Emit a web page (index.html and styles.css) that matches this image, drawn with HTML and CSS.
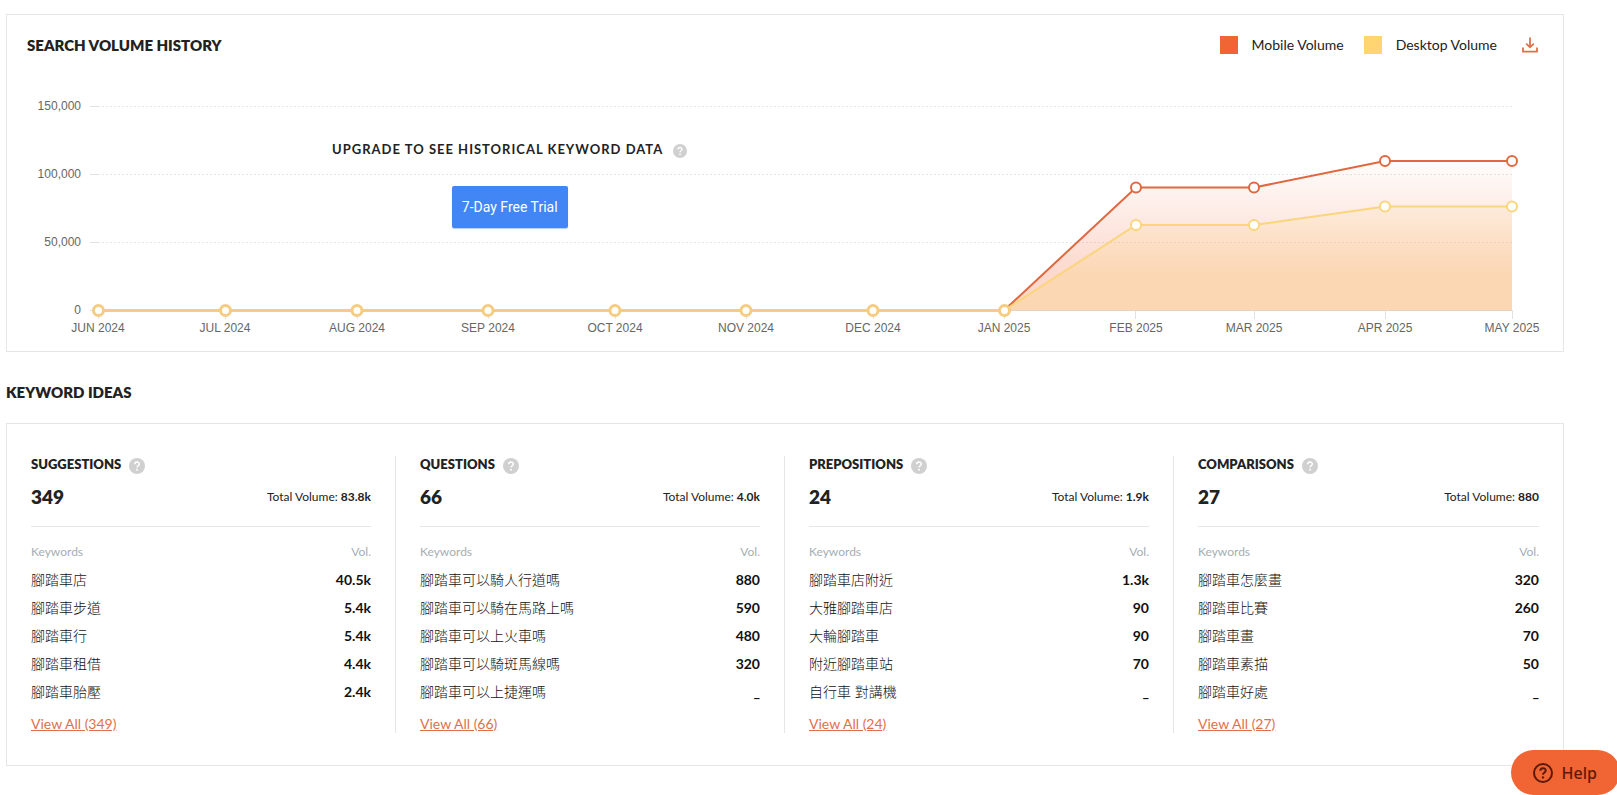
FILE: index.html
```html
<!DOCTYPE html>
<html lang="zh-Hant">
<head>
<meta charset="utf-8">
<title>Keyword overview</title>
<link rel="stylesheet" href="styles.css">
</head>
<body>
<svg class="defs" width="0" height="0" aria-hidden="true">
  <symbol id="hint" viewBox="0 0 16 16">
    <circle cx="8" cy="8" r="8" fill="#d0d0d1"/>
    <path d="M5.7 6.3 C5.7 3.2 10.3 3.3 10.3 6 C10.3 7.8 8 7.7 8 9.6" fill="none" stroke="#fff" stroke-width="1.5"/>
    <circle cx="8" cy="11.8" r="1" fill="#fff"/>
  </symbol>
</svg>
<main class="page">
  <section class="card history">
    <header class="history-head">
      <h2 class="title">SEARCH VOLUME HISTORY</h2>
      <div class="legend">
        <span class="legend-item"><span class="swatch mobile"></span>Mobile Volume</span>
        <span class="legend-item"><span class="swatch desktop"></span>Desktop Volume</span>
        <button class="download" type="button" aria-label="Download">
          <svg width="16" height="16" viewBox="0 0 16 16" fill="none" stroke="#e0704b" stroke-width="1.8"><path d="M8 0.5 V10 M4.2 6.6 L8 10.3 L11.8 6.6 M1 10.5 V14.7 H15 V10.5"/></svg>
        </button>
      </div>
    </header>
    <div class="chart">
      <svg class="plot" viewBox="0 0 1556 287" role="img" aria-label="Search volume by month">
        <defs>
          <linearGradient id="gm" gradientUnits="userSpaceOnUse" x1="0" y1="97" x2="0" y2="211"><stop offset="0" stop-color="#f26334" stop-opacity="0.02"/><stop offset="1" stop-color="#f26334" stop-opacity="0.25"/></linearGradient>
          <linearGradient id="gd" gradientUnits="userSpaceOnUse" x1="0" y1="120" x2="0" y2="211"><stop offset="0" stop-color="#ffd470" stop-opacity="0.05"/><stop offset="1" stop-color="#fbd474" stop-opacity="0.28"/></linearGradient>
        </defs>
        <path class="grid" d="M91 42.5H1505M91 110.5H1505M91 178.5H1505"/>
        <path class="axis" d="M83 42.5H92M83 110.5H92M83 178.5H92M83 246.5H1506M91.5 247V255M218.5 247V255M350.5 247V255M481.5 247V255M608.5 247V255M739.5 247V255M866.5 247V255M997.5 247V255M1128.5 247V255M1247.5 247V255M1378.5 247V255M1505.5 247V255"/>
        <path fill="url(#gm)" d="M997 246.5L1129 123.5H1247L1378 97H1505V246.5Z"/>
        <path fill="url(#gd)" d="M997 246.5L1129 161H1247L1378 142.5H1505V246.5Z"/>
        <g class="series mobile-line">
          <path d="M997 246.5L1129 123.5H1247L1378 97H1505"/>
          <circle cx="1129" cy="123.5" r="5"/><circle cx="1247" cy="123.5" r="5"/><circle cx="1378" cy="97" r="5"/><circle cx="1505" cy="97" r="5"/>
        </g>
        <g class="series desktop-line">
          <path d="M997 246.5L1129 161H1247L1378 142.5H1505"/>
          <circle cx="1129" cy="161" r="5"/><circle cx="1247" cy="161" r="5"/><circle cx="1378" cy="142.5" r="5"/><circle cx="1505" cy="142.5" r="5"/>
        </g>
        <g class="series zero-line">
          <path d="M91 246.5H997"/>
          <circle cx="91.5" cy="246.5" r="5"/><circle cx="218.5" cy="246.5" r="5"/><circle cx="350" cy="246.5" r="5"/><circle cx="481" cy="246.5" r="5"/><circle cx="608" cy="246.5" r="5"/><circle cx="739" cy="246.5" r="5"/><circle cx="866" cy="246.5" r="5"/><circle cx="997.5" cy="246.5" r="5"/>
        </g>
        <g class="labels y-labels">
          <text x="74" y="46">150,000</text><text x="74" y="114">100,000</text><text x="74" y="182">50,000</text><text x="74" y="250">0</text>
        </g>
        <g class="labels x-labels">
          <text x="91" y="268">JUN 2024</text><text x="218" y="268">JUL 2024</text><text x="350" y="268">AUG 2024</text><text x="481" y="268">SEP 2024</text><text x="608" y="268">OCT 2024</text><text x="739" y="268">NOV 2024</text><text x="866" y="268">DEC 2024</text><text x="997" y="268">JAN 2025</text><text x="1129" y="268">FEB 2025</text><text x="1247" y="268">MAR 2025</text><text x="1378" y="268">APR 2025</text><text x="1505" y="268">MAY 2025</text>
        </g>
      </svg>
      <div class="upgrade">
        <p class="upgrade-text">UPGRADE TO SEE HISTORICAL KEYWORD DATA <svg class="hint-small" width="14" height="14"><use href="#hint"/></svg></p>
        <button class="trial" type="button">7-Day Free Trial</button>
      </div>
    </div>
  </section>

  <h2 class="title ideas-title">KEYWORD IDEAS</h2>

  <section class="card ideas">
    <article class="idea">
      <h3 class="idea-name">SUGGESTIONS <svg width="16" height="16"><use href="#hint"/></svg></h3>
      <div class="summary"><strong class="count">349</strong><span class="total">Total Volume: <b>83.8k</b></span></div>
      <table class="words">
        <thead><tr><th>Keywords</th><th>Vol.</th></tr></thead>
        <tbody>
          <tr><td>腳踏車店</td><td>40.5k</td></tr>
          <tr><td>腳踏車步道</td><td>5.4k</td></tr>
          <tr><td>腳踏車行</td><td>5.4k</td></tr>
          <tr><td>腳踏車租借</td><td>4.4k</td></tr>
          <tr><td>腳踏車胎壓</td><td>2.4k</td></tr>
        </tbody>
      </table>
      <a class="all" href="#">View All (349)</a>
    </article>
    <article class="idea">
      <h3 class="idea-name">QUESTIONS <svg width="16" height="16"><use href="#hint"/></svg></h3>
      <div class="summary"><strong class="count">66</strong><span class="total">Total Volume: <b>4.0k</b></span></div>
      <table class="words">
        <thead><tr><th>Keywords</th><th>Vol.</th></tr></thead>
        <tbody>
          <tr><td>腳踏車可以騎人行道嗎</td><td>880</td></tr>
          <tr><td>腳踏車可以騎在馬路上嗎</td><td>590</td></tr>
          <tr><td>腳踏車可以上火車嗎</td><td>480</td></tr>
          <tr><td>腳踏車可以騎斑馬線嗎</td><td>320</td></tr>
          <tr><td>腳踏車可以上捷運嗎</td><td>_</td></tr>
        </tbody>
      </table>
      <a class="all" href="#">View All (66)</a>
    </article>
    <article class="idea">
      <h3 class="idea-name">PREPOSITIONS <svg width="16" height="16"><use href="#hint"/></svg></h3>
      <div class="summary"><strong class="count">24</strong><span class="total">Total Volume: <b>1.9k</b></span></div>
      <table class="words">
        <thead><tr><th>Keywords</th><th>Vol.</th></tr></thead>
        <tbody>
          <tr><td>腳踏車店附近</td><td>1.3k</td></tr>
          <tr><td>大雅腳踏車店</td><td>90</td></tr>
          <tr><td>大輪腳踏車</td><td>90</td></tr>
          <tr><td>附近腳踏車站</td><td>70</td></tr>
          <tr><td>自行車 對講機</td><td>_</td></tr>
        </tbody>
      </table>
      <a class="all" href="#">View All (24)</a>
    </article>
    <article class="idea">
      <h3 class="idea-name">COMPARISONS <svg width="16" height="16"><use href="#hint"/></svg></h3>
      <div class="summary"><strong class="count">27</strong><span class="total">Total Volume: <b>880</b></span></div>
      <table class="words">
        <thead><tr><th>Keywords</th><th>Vol.</th></tr></thead>
        <tbody>
          <tr><td>腳踏車怎麼畫</td><td>320</td></tr>
          <tr><td>腳踏車比賽</td><td>260</td></tr>
          <tr><td>腳踏車畫</td><td>70</td></tr>
          <tr><td>腳踏車素描</td><td>50</td></tr>
          <tr><td>腳踏車好處</td><td>_</td></tr>
        </tbody>
      </table>
      <a class="all" href="#">View All (27)</a>
    </article>
  </section>
</main>
<button class="help" type="button">
  <svg width="20" height="20" viewBox="0 0 20 20" fill="none" stroke="#5c1a06" stroke-width="2"><circle cx="10" cy="10" r="9"/><path d="M7.3 7.8 C7.3 4.3 12.7 4.5 12.7 7.5 C12.7 9.6 10 9.3 10 11.8"/><circle cx="10" cy="14.4" r="1.2" fill="#5c1a06" stroke="none"/></svg>
  Help
</button>
</body>
</html>
```
FILE: styles.css
```css
* { box-sizing: border-box; }
body {
  margin: 0;
  background: #fff;
  color: #222;
  font: 14px/20px Lato, "Noto Sans CJK TC", sans-serif;
}
.defs { position: absolute; }
.page { padding: 14px 53px 28px 6px; }
.card { border: 1px solid #e6e6e6; }
.title { margin: 0; font-size: 15px; line-height: 20px; font-weight: 800; color: #222; }

.history-head {
  display: flex;
  justify-content: space-between;
  align-items: center;
  padding: 13px 20px 2px;
  min-height: 49px;
}
.legend { display: flex; align-items: center; gap: 20px; }
.legend-item { display: flex; align-items: center; gap: 14px; }
.swatch { width: 18px; height: 18px; }
.swatch.mobile { background: #f16434; }
.swatch.desktop { background: #ffd572; }
.download {
  display: grid;
  place-items: center;
  width: 26px;
  height: 26px;
  padding: 0;
  border: 0;
  background: none;
}

.chart { position: relative; }
.plot { display: block; width: 100%; height: auto; }
.grid { fill: none; stroke: #e6e6e6; stroke-dasharray: 2 2; }
.axis { fill: none; stroke: #e2e2e2; }
.series path { fill: none; stroke-width: 2; }
.series circle { fill: #fff; stroke-width: 2; }
.mobile-line { stroke: #e0683f; }
.desktop-line { stroke: #fad57c; }
.zero-line { stroke: #f5cc82; }
.series.zero-line path, .series.zero-line circle { stroke-width: 3; }
.labels { font: 12px "Liberation Sans", sans-serif; fill: #666; }
.x-labels { text-anchor: middle; }
.y-labels { text-anchor: end; }

.upgrade {
  position: absolute;
  top: 75px;
  left: 0;
  width: 65%;
  padding-right: 6px;
  display: flex;
  flex-direction: column;
  align-items: center;
  gap: 27px;
}
.upgrade-text {
  display: flex;
  align-items: center;
  gap: 10px;
  margin: 0;
  font-size: 13px;
  line-height: 20px;
  font-weight: 700;
  letter-spacing: 1px;
}
.hint-small { margin-top: 3px; }
.trial {
  height: 42px;
  padding: 0 10px;
  border: 0;
  border-radius: 2px;
  background: #4285f4;
  box-shadow: 0 1px 1px #4285f466;
  color: #fff;
  font: 14px/20px Roboto, sans-serif;
}

.ideas-title { margin: 30px 0 21px; }
.ideas { display: grid; grid-template-columns: repeat(4, 1fr); padding: 32px 0; }
.idea { padding: 0 24px; border-right: 1px solid #e6e6e6; }
.idea:last-child { border-right: 0; }
.idea-name {
  display: flex;
  align-items: center;
  gap: 8px;
  margin: 0;
  font-size: 13px;
  line-height: 16px;
  font-weight: 800;
}
.idea-name svg { margin: 2px 0 -2px; }
.summary {
  display: flex;
  justify-content: space-between;
  align-items: center;
  padding: 10px 0 14px;
  border-bottom: 1px solid #e6e6e6;
}
.count { font-size: 19px; line-height: 30px; font-weight: 800; }
.total { font-size: 12px; }
.words { width: 100%; margin-top: 11px; border-collapse: collapse; }
.words th, .words td { height: 28px; padding: 0; line-height: 20px; text-align: left; }
.words th { color: #a4aeb2; font-size: 12px; font-weight: 400; }
.words td { color: #111; font-weight: 300; }
.words th:last-child, .words td:last-child { text-align: right; }
.words td:last-child { font-weight: 700; }
.all {
  display: block;
  width: fit-content;
  margin-top: 9px;
  line-height: 18px;
  color: #e0704b;
  text-decoration: underline;
}

.help {
  position: fixed;
  right: -3px;
  bottom: 0;
  display: flex;
  align-items: center;
  gap: 9px;
  height: 45px;
  padding: 0 23px 0 22px;
  border: 0;
  border-radius: 23px;
  background: #f16434;
  color: #5c1a06;
  font: 500 16px/20px "Noto Sans", sans-serif;
}
```
